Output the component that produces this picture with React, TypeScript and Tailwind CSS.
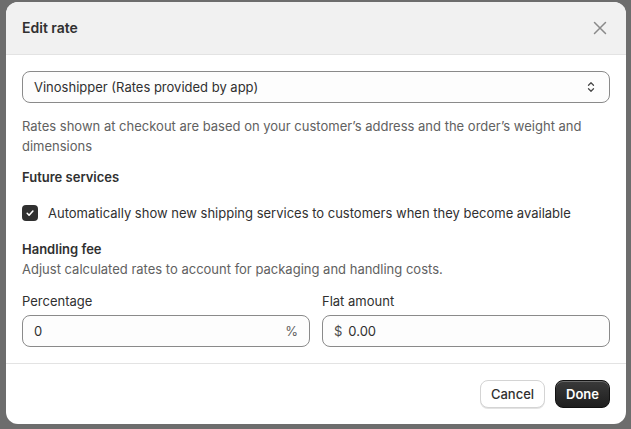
import React from "react";

const font = { fontFamily: "Inter, 'Noto Sans', sans-serif" };

function App() {
  return (
    <div
      className="w-[631px] h-[429px] bg-[#6d6d6d] pt-[2px] pl-[6px] overflow-hidden"
      style={font}
    >
      <div className="w-[620px] h-[422px] bg-white rounded-[12px] overflow-hidden flex flex-col text-[13px] leading-5 text-[#303030]">
        {/* header */}
        <div className="h-[53px] shrink-0 bg-[#f1f1f1] border-b border-[#e3e3e3] flex items-center justify-between pl-4 pr-4">
          <h2 className="text-[14px] font-semibold">Edit rate</h2>
          <svg
            width="20"
            height="20"
            viewBox="0 0 20 20"
            fill="none"
            stroke="#8a8a8a"
            strokeWidth="1.5"
            strokeLinecap="round"
            aria-label="close"
          >
            <path d="M4.5 4.5l11 11M15.5 4.5l-11 11" />
          </svg>
        </div>

        {/* body */}
        <div className="px-4 pt-4 pb-4 border-b border-[#e3e3e3]">
          <div className="h-8 rounded-[8px] border border-[#8a8a8a] bg-[#fdfdfd] flex items-center justify-between pl-[11px] pr-[10px]">
            <span>Vinoshipper (Rates provided by app)</span>
            <svg width="16" height="16" viewBox="0 0 16 16" fill="none" stroke="#4a4a4a" strokeWidth="1.3" strokeLinecap="round" strokeLinejoin="round">
              <path d="M5.5 6.3L8 3.8l2.5 2.5" />
              <path d="M5.5 9.7L8 12.2l2.5-2.5" />
            </svg>
          </div>

          <p className="mt-[13px] text-[#616161]">
            Rates shown at checkout are based on your customer’s address and the order’s weight and dimensions
          </p>

          <h3 className="mt-[11px] font-semibold">Future services</h3>

          <label className="mt-4 flex items-center gap-[10px]">
            <span className="w-4 h-4 rounded-[4px] bg-[#303030] flex items-center justify-center">
              <svg width="12" height="12" viewBox="0 0 12 12" fill="none" stroke="white" strokeWidth="1.6" strokeLinecap="round" strokeLinejoin="round">
                <path d="M3.2 6.3l1.9 1.9 3.8-4.2" />
              </svg>
            </span>
            <span>Automatically show new shipping services to customers when they become available</span>
          </label>

          <h3 className="mt-4 font-semibold">Handling fee</h3>
          <p className="text-[#616161]">Adjust calculated rates to account for packaging and handling costs.</p>

          <div className="mt-3 grid grid-cols-2 gap-3">
            <div>
              <div>Percentage</div>
              <div className="mt-1 h-8 rounded-[8px] border border-[#8a8a8a] bg-[#fdfdfd] flex items-center justify-between pl-[11px] pr-[11px]">
                <span>0</span>
                <span className="text-[#616161]">%</span>
              </div>
            </div>
            <div>
              <div>Flat amount</div>
              <div className="mt-1 h-8 rounded-[8px] border border-[#8a8a8a] bg-[#fdfdfd] flex items-center gap-[6px] pl-[11px]">
                <span className="text-[#4a4a4a]">$</span>
                <span>0.00</span>
              </div>
            </div>
          </div>
        </div>

        {/* footer */}
        <div className="flex justify-end gap-[10px] px-4 pt-4">
          <button className="h-7 px-[10px] rounded-[8px] bg-white border border-[#d4d4d4] shadow-[0_1px_0_#e3e3e3] text-[13px] font-medium text-[#303030]">
            Cancel
          </button>
          <button className="h-7 px-[10px] rounded-[8px] bg-gradient-to-b from-[#3a3a3a] to-[#1f1f1f] border border-[#121212] shadow-[inset_0_1px_0_rgba(255,255,255,0.25)] text-[13px] font-semibold text-white">
            Done
          </button>
        </div>
      </div>
    </div>
  );
}

export default App;
